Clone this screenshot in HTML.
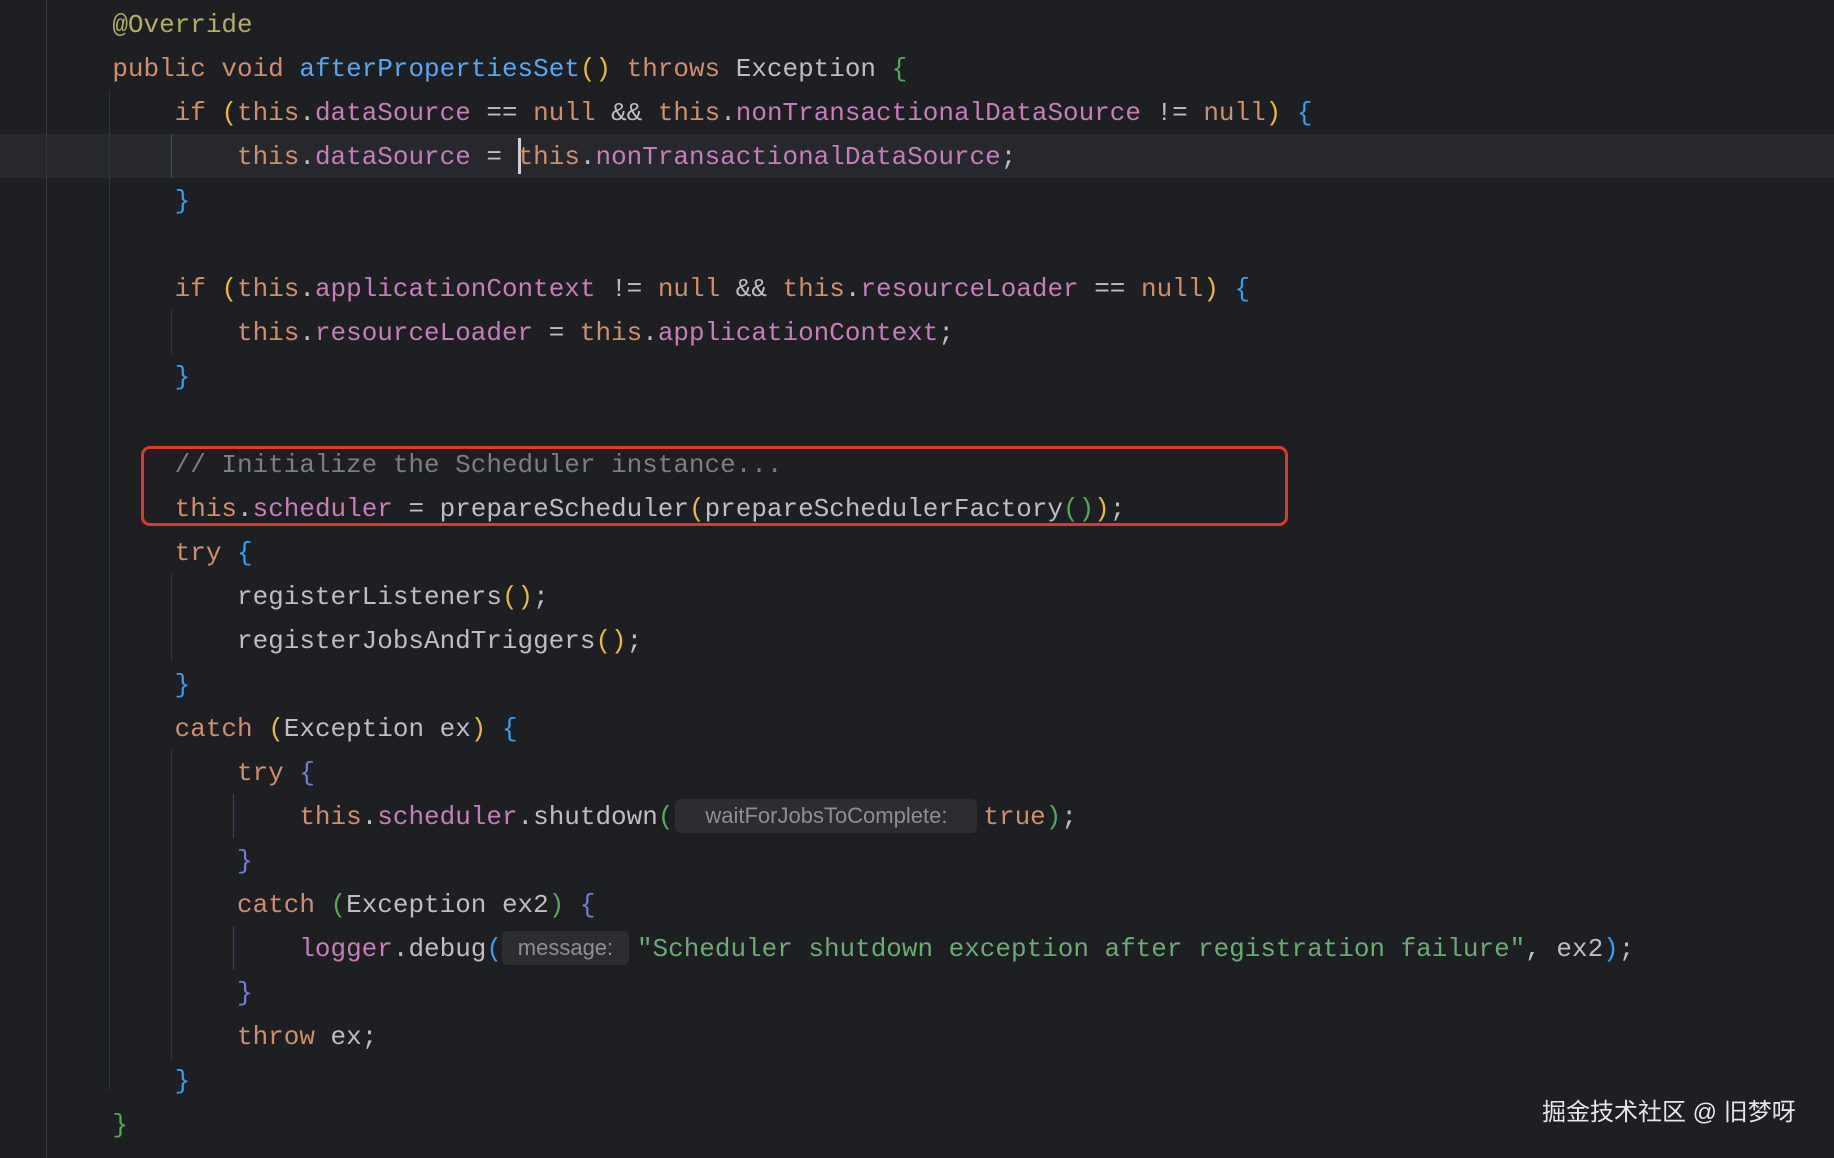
<!DOCTYPE html>
<html><head><meta charset="utf-8"><style>
html,body{margin:0;padding:0;background:#1e1f22;width:1834px;height:1158px;overflow:hidden;position:relative}
.g{position:absolute;width:1px;background:#34363b}
.code{position:absolute;left:50px;top:3px;margin:0;font:25.97px/44px "Liberation Mono",monospace;color:#bcbec4;white-space:pre}
.k{color:#cf8e6d}.f{color:#c77dbb}.m{color:#56a8f5}.s{color:#6aab73}.c{color:#7a7e85}.a{color:#b3ae60}
.y{color:#e8ba36}.gr{color:#54a857}.b{color:#359ff4}.p{color:#6e7ed9}
.h{display:inline-block;font:22px/34px "Liberation Sans",sans-serif;color:#8c8f94;background:#2b2d30;border-radius:6px;text-align:center;vertical-align:1px}
</style></head><body>
<div style="position:absolute;left:0;top:134px;width:1834px;height:44px;background:#26282e"></div>
<div class="g" style="left:46px;top:0;height:1158px"></div>
<div class="g" style="left:109px;top:90px;height:1000px;background:#2f3a2f"></div>
<div class="g" style="left:171px;top:134px;height:44px;background:#3a4a7a"></div>
<div class="g" style="left:171px;top:310px;height:44px"></div>
<div class="g" style="left:171px;top:574px;height:88px"></div>
<div class="g" style="left:171px;top:750px;height:310px"></div>
<div class="g" style="left:233px;top:794px;height:44px;background:#3f3f6a"></div>
<div class="g" style="left:233px;top:926px;height:44px;background:#3f3f6a"></div>
<div style="position:absolute;left:518px;top:138px;width:3px;height:36px;background:#ced0d6"></div>
<pre class="code">    <span class="a">@Override</span>
    <span class="k">public void </span><span class="m">afterPropertiesSet</span><span class="y">()</span> <span class="k">throws</span> Exception <span class="gr">{</span>
        <span class="k">if </span><span class="y">(</span><span class="k">this</span>.<span class="f">dataSource</span> == <span class="k">null</span> &amp;&amp; <span class="k">this</span>.<span class="f">nonTransactionalDataSource</span> != <span class="k">null</span><span class="y">)</span> <span class="b">{</span>
            <span class="k">this</span>.<span class="f">dataSource</span> = <span class="k">this</span>.<span class="f">nonTransactionalDataSource</span>;
        <span class="b">}</span>

        <span class="k">if </span><span class="y">(</span><span class="k">this</span>.<span class="f">applicationContext</span> != <span class="k">null</span> &amp;&amp; <span class="k">this</span>.<span class="f">resourceLoader</span> == <span class="k">null</span><span class="y">)</span> <span class="b">{</span>
            <span class="k">this</span>.<span class="f">resourceLoader</span> = <span class="k">this</span>.<span class="f">applicationContext</span>;
        <span class="b">}</span>

        <span class="c">// Initialize the Scheduler instance...</span>
        <span class="k">this</span>.<span class="f">scheduler</span> = prepareScheduler<span class="y">(</span>prepareSchedulerFactory<span class="gr">()</span><span class="y">)</span>;
        <span class="k">try </span><span class="b">{</span>
            registerListeners<span class="y">()</span>;
            registerJobsAndTriggers<span class="y">()</span>;
        <span class="b">}</span>
        <span class="k">catch </span><span class="y">(</span>Exception ex<span class="y">)</span> <span class="b">{</span>
            <span class="k">try </span><span class="p">{</span>
                <span class="k">this</span>.<span class="f">scheduler</span>.shutdown<span class="gr">(</span><span class="h" style="width:302px;margin:0 6px 0 2px">waitForJobsToComplete:</span><span class="k">true</span><span class="gr">)</span>;
            <span class="p">}</span>
            <span class="k">catch </span><span class="gr">(</span>Exception ex2<span class="gr">)</span> <span class="p">{</span>
                <span class="f">logger</span>.debug<span class="b">(</span><span class="h" style="width:127px;margin:0 8px 0 0">message:</span><span class="s">"Scheduler shutdown exception after registration failure"</span>, ex2<span class="b">)</span>;
            <span class="p">}</span>
            <span class="k">throw </span>ex;
        <span class="b">}</span>
    <span class="gr">}</span></pre>
<div style="position:absolute;left:141px;top:446px;width:1141px;height:74px;border:3px solid #e0372c;border-radius:9px"></div>
<div style="position:absolute;left:1542px;top:1097px;font:24px/32px 'Liberation Sans','Noto Sans CJK SC',sans-serif;color:#e6e6e6;white-space:nowrap">掘金技术社区 @ 旧梦呀</div>
</body></html>
